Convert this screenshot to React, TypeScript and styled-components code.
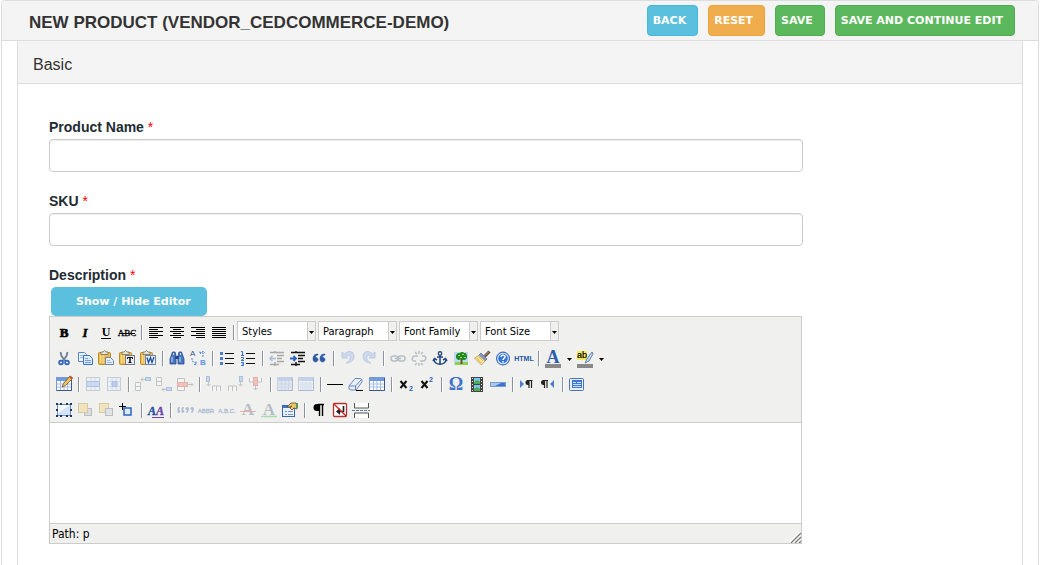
import React from "react";
import styled, { createGlobalStyle, css } from "styled-components";

const tahoma = '"DejaVu Sans Condensed", "DejaVu Sans", sans-serif';
const verdana = '"DejaVu Sans", sans-serif';
const arial = '"Liberation Sans", Arial, sans-serif';

const GlobalStyle = createGlobalStyle`
  * { box-sizing: border-box; }
  body { margin: 0; background: #fff; color: #333; font-family: ${arial}; }
`;

const Page = styled.main`
  display: flex;
  flex-direction: column;
  min-height: 100vh;
  margin: 0 1px;
  border: 1px solid #ddd;
  border-bottom: 0;
  border-radius: 4px 4px 0 0;
`;

const Header = styled.header`
  display: flex;
  align-items: center;
  justify-content: space-between;
  height: 40px;
  padding: 0 23px 0 27px;
  background: #f4f4f4;
  border-bottom: 1px solid #ddd;
  border-radius: 4px 4px 0 0;
`;

const Title = styled.h1`
  margin: 0;
  padding-top: 4px;
  font-size: 17px;
  line-height: 20px;
  font-weight: 700;
  color: #333;
`;

const Actions = styled.div`
  display: flex;
  gap: 10px;
`;

const tones = {
  info: { fill: "#5bc0de", edge: "#46b8da" },
  warning: { fill: "#f0ad4e", edge: "#eea236" },
  success: { fill: "#5cb85c", edge: "#4cae4c" },
};

const ActionButton = styled.button<{ $tone: keyof typeof tones }>`
  height: 31px;
  padding: 0 11px 0 5px;
  border: 1px solid ${(p) => tones[p.$tone].edge};
  border-radius: 4px;
  background: ${(p) => tones[p.$tone].fill};
  color: #fff;
  font: 700 11px/18px ${verdana};
  white-space: nowrap;
`;

const Section = styled.section`
  flex: 1;
  margin: 0 15px;
  border: 1px solid #ddd;
  border-width: 0 1px;
`;

const SectionTitle = styled.h2`
  margin: 0;
  padding: 15px 15px 9px;
  background: #f4f4f4;
  border-bottom: 1px solid #ddd;
  font-size: 16px;
  line-height: 18px;
  font-weight: 400;
`;

const Form = styled.form`
  display: flex;
  flex-direction: column;
  gap: 19px;
  width: 100%;
  padding: 33px 31px 20px;
`;

const Field = styled.div`
  display: flex;
  flex-direction: column;
  width: 80%;
`;

const Label = styled.label`
  padding-bottom: 2px;
  font-size: 14px;
  line-height: 20px;
  font-weight: 700;
  color: #222b33;
`;

const Required = styled.span`
  font-weight: 400;
  color: #f00;
`;

const TextInput = styled.input`
  width: 100%;
  height: 33px;
  padding: 6px 12px;
  border: 1px solid #ccc;
  border-radius: 4px;
  background: #fff;
  box-shadow: inset 0 1px 1px rgba(0, 0, 0, 0.075);
  font: 14px/20px ${arial};
`;

const ToggleButton = styled.button`
  align-self: flex-start;
  height: 29px;
  margin-left: 2px;
  padding: 0 16px 0 25px;
  border: 0;
  border-radius: 5px;
  background: #5bc0de;
  color: #fff;
  font: 700 11px/18px ${verdana};
`;

const Editor = styled.div`
  margin-right: 1px;
  border: 1px solid #ccc;
`;

const Toolbar = styled.div`
  display: flex;
  flex-direction: column;
  gap: 6px;
  padding: 4px 4px 3px;
  background: #f0f0ee;
  border-bottom: 1px solid #ccc;
`;

const ToolRow = styled.div`
  display: flex;
  height: 20px;
`;

const Tool = styled.button<{ $split?: boolean }>`
  display: flex;
  flex: none;
  width: 20px;
  height: 20px;
  margin-right: 1px;
  padding: 0;
  border: 0;
  background: none;
  ${(p) => p.$split && css`width: 31px;`}
  &:disabled { opacity: 0.35; }
`;

const Divider = styled.span`
  flex: none;
  width: 2px;
  height: 15px;
  margin: 4px 3px 0;
  border-left: 1px solid #8a93a5;
  border-right: 1px solid #fff;
`;

const Picker = styled.label`
  position: relative;
  flex: none;
  width: 79px;
  height: 20px;
  margin-right: 2px;
  &:first-of-type { margin-left: -1px; }
`;

const PickerSelect = styled.select`
  appearance: none;
  width: 100%;
  height: 20px;
  padding: 2px 10px 0 4px;
  border: 1px solid #ccc;
  border-radius: 0;
  background: #fff;
  color: #000;
  font: 11px/16px ${tahoma};
`;

const PickerArrow = styled.span`
  position: absolute;
  top: 1px;
  right: 0;
  display: flex;
  align-items: center;
  justify-content: center;
  width: 9px;
  height: 18px;
  padding-top: 3px;
  background: #f0f0ee;
  border: 1px solid #ccc;
  border-width: 0 1px;
  pointer-events: none;
`;

const Content = styled.textarea`
  display: block;
  width: 100%;
  height: 100px;
  padding: 8px;
  border: 0;
  outline: 0;
  resize: none;
  background: #fff;
`;

const StatusBar = styled.div`
  display: flex;
  align-items: flex-end;
  justify-content: space-between;
  height: 20px;
  padding-left: 2px;
  border-top: 1px solid #ccc;
  background: #f0f0ee;
  color: #000;
  font: 12px/18px ${tahoma};
`;

const Glyph = styled.svg`
  flex: none;
  overflow: visible;
`;

const serif = "Liberation Serif, serif";
const sans = "Liberation Sans, sans-serif";

const bars = (rows: [number, number][]) => (
  <g fill="#000" shapeRendering="crispEdges">
    {rows.map(([x, w], i) => (
      <rect key={i} x={x} y={6 + i * 2} width={w} height="1" />
    ))}
  </g>
);

const clipboard = (
  <>
    <rect x="2.500" y="5.500" width="12" height="12" rx="1" fill="#f0bd4a" stroke="#b98a25" />
    <path d="M4.500 8v8M7 8v8" stroke="#fbe3a0" />
    <path d="M5 7.500V5h2l1.500-1.500L10 5h2v2.500z" fill="#e8e4d2" stroke="#77705a" strokeWidth=".8" />
  </>
);

const grid = (
  <>
    <rect x="2.500" y="4.500" width="15" height="13" fill="#fff" stroke="#7f97c4" />
    <rect x="3" y="5" width="14" height="3" fill="#6f9be6" />
    <path d="M3 11h14M3 14h14M6.500 8v9M10 8v9M13.500 8v9" stroke="#a3bce8" />
    <path d="M2.500 17.500h15V5" fill="none" stroke="#3c5788" />
  </>
);

const paperGrid = (
  <>
    <rect x="3.500" y="4.500" width="13" height="13" fill="#e6efff" stroke="#7489b5" />
    <path d="M4 8.500h12M4 13.500h12M8 5v12M12 5v12" stroke="#a5b8dd" />
  </>
);

const icons: Record<string, React.ReactNode> = {
  bold: <text x="10" y="16" textAnchor="middle" fontFamily={serif} fontWeight="700" fontSize="13" stroke="#000" strokeWidth=".7">B</text>,
  italic: <text x="10" y="16" textAnchor="middle" fontFamily={serif} fontWeight="700" fontStyle="italic" fontSize="13" stroke="#000" strokeWidth=".4">I</text>,
  underline: (
    <>
      <text x="10" y="15" textAnchor="middle" fontFamily={serif} fontWeight="700" fontSize="12">U</text>
      <path d="M5 17.500h10" stroke="#000" />
    </>
  ),
  strike: (
    <>
      <text x="10" y="15" textAnchor="middle" fontFamily={serif} fontSize="9" stroke="#000" strokeWidth=".3">ABC</text>
      <path d="M2 12.500h16" stroke="#000" />
    </>
  ),
  left: bars([[3, 14], [3, 9], [3, 14], [3, 9], [3, 14], [3, 9]]),
  center: bars([[3, 14], [6, 8], [3, 14], [6, 8], [3, 14], [6, 8]]),
  right: bars([[3, 14], [8, 9], [3, 14], [8, 9], [3, 14], [8, 9]]),
  full: bars([[3, 14], [3, 14], [3, 14], [3, 14], [3, 14], [3, 14]]),
  cut: (
    <>
      <path d="M6.500 5l1 4 4 5M13.500 5l-1 4-4 5" fill="none" stroke="#6c7f96" strokeWidth="1.800" />
      <circle cx="7" cy="15.500" r="1.900" fill="none" stroke="#2d61bd" strokeWidth="1.700" />
      <circle cx="13" cy="15.500" r="1.900" fill="none" stroke="#2d61bd" strokeWidth="1.700" />
    </>
  ),
  copy: (
    <>
      <path d="M3.500 5.500h6l2 2v7h-8z" fill="#eaf3ff" stroke="#5a86cc" />
      <path d="M5 8.500h4M5 10.500h4" stroke="#92b4e6" />
      <path d="M8.500 8.500h6l3 3v6h-9z" fill="#dceaff" stroke="#3f6fbd" />
      <path d="M10 11.500h3M10 13.500h6M10 15.500h6" stroke="#6f9be0" />
    </>
  ),
  paste: (
    <>
      {clipboard}
      <path d="M9.500 10.500h5l3 3v4h-8z" fill="#e4eefc" stroke="#7086a8" />
      <path d="M11 13.500h3M11 15.500h5" stroke="#9bb3d8" />
    </>
  ),
  pasteText: (
    <>
      {clipboard}
      <rect x="8.500" y="8.500" width="9" height="9" fill="#e8ecf4" stroke="#778" />
      <path d="M10.500 12v-1.500h5V12M11.500 15.500h3" fill="none" stroke="#111" />
      <path d="M13 10v6" stroke="#111" strokeWidth="1.500" />
    </>
  ),
  pasteWord: (
    <>
      {clipboard}
      <rect x="7.500" y="8.500" width="10" height="9" fill="#e6effe" stroke="#6c84ae" />
      <path d="M9 10.500l1.500 5 2-5 1.500 5 2-5.500" fill="none" stroke="#234f9e" strokeWidth="1.300" />
    </>
  ),
  search: (
    <>
      <path d="M5.500 5h2.500l1 4v8H3v-5zM12 5h2.500l2.500 7v5h-6V9z" fill="#4a78c0" stroke="#24478d" strokeWidth=".8" />
      <path d="M8 9h4v3H8z" fill="#24478d" />
      <path d="M5 10v5M13 10v5M6.500 6v2M13.500 6v2" stroke="#c5daf8" />
    </>
  ),
  replace: (
    <>
      <text x="2" y="9" fontFamily={sans} fontSize="8" fill="#36548c">A</text>
      <text x="12" y="18" fontFamily={sans} fontSize="8" fontWeight="700" fill="#5893ef">B</text>
      <path d="M4 11v3l5 3M8 14.500v3H5M15 10V6l-4-1M12 7l3-3 2 2" fill="none" stroke="#4c82dd" strokeDasharray="2 1" />
    </>
  ),
  bullets: (
    <>
      <path d="M8 6.500h9M8 11.500h9M8 16.500h9" stroke="#111" />
      <path d="M3 5h3v3H3zM3 10h3v3H3zM3 15h3v3H3z" fill="#4d7ccc" />
    </>
  ),
  numbers: (
    <>
      <path d="M8 6.500h9M8 11.500h9M8 16.500h9" stroke="#111" />
      <path d="M3 4.500h1.500V8M3 8.500h3M3 10.500h2.500v1.500L3 13.500h3M3 15.500h2.500v3H3M4 17h1.500" fill="none" stroke="#3d73cf" />
    </>
  ),
  outdent: (
    <>
      <path d="M3 5.500h14M10 8.500h7M10 11.500h5M10 14.500h7M3 17.500h9M8 4v2M8 15v4" stroke="#222" strokeWidth="1.400" />
      <path d="M9 11.500H3M5.500 9L3 11.500 5.500 14" fill="none" stroke="#2d61bd" strokeWidth="1.600" />
    </>
  ),
  indent: (
    <>
      <path d="M3 5.500h14M10 8.500h7M10 11.500h5M10 14.500h7M3 17.500h9M8 4v2M8 15v4" stroke="#111" strokeWidth="1.400" />
      <path d="M2 11.500h6M5.500 9L8 11.500 5.500 14" fill="none" stroke="#2d61bd" strokeWidth="1.800" />
    </>
  ),
  quote: (
    <path d="M9 7C5 7 4 9 4 12c0 2 1 3 2.500 3S9 14 9 12.500 8 10.500 6.500 10.500C6.500 9 7.500 8 9 8zM16 7c-4 0-5 2-5 5 0 2 1 3 2.500 3s2.500-1 2.500-2.500-1-2-2.500-2c0-1.500 1-2.500 2.500-2.500z" fill="#2c58a8" stroke="#2c58a8" strokeWidth=".5" />
  ),
  undo: <path d="M4 5v6h6L8 9c3-2 5 0 4 3-.5 2-2 3-4 4 5 0 8-3 8-7 0-5-6-6-9.500-2z" fill="#8db4ef" stroke="#4774bd" strokeWidth=".8" />,
  redo: <path d="M16 5v6h-6l2-2c-3-2-5 0-4 3 .5 2 2 3 4 4-5 0-8-3-8-7 0-5 6-6 9.500-2z" fill="#8db4ef" stroke="#4774bd" strokeWidth=".8" />,
  link: (
    <g fill="none" stroke="#53637d" strokeWidth="1.500">
      <rect x="3" y="9" width="7" height="5" rx="2.500" />
      <rect x="10" y="9" width="7" height="5" rx="2.500" />
      <path d="M7 11.500h6" />
    </g>
  ),
  unlink: (
    <g fill="none" stroke="#53637d" strokeWidth="1.400">
      <path d="M9 9H6C3 9 2 14 5 14h2M11 14h3c3 0 4-5 1-5h-2M6 5l2 2M14 5l-2 2M10 4v3M6 18l2-2M14 18l-2-2M10 16v3" />
    </g>
  ),
  anchor: (
    <>
      <circle cx="10" cy="6.500" r="1.700" fill="#fff" stroke="#244983" strokeWidth="1.400" />
      <path d="M10 8v9M7 10h6M4 12c0 7 12 7 12 0M3 14l1.500-2.500L7 13M17 14l-1.500-2.500L13 13" fill="none" stroke="#244983" strokeWidth="1.600" />
    </>
  ),
  image: (
    <>
      <rect x="3.500" y="5.500" width="13" height="12" fill="#b5dcff" stroke="#c5d6ea" />
      <path d="M4 15h13v3H4z" fill="#8bd34b" />
      <path d="M9.500 11h2v6h-2z" fill="#80501e" />
      <path d="M5 11V8l2-2h2l1-1h2l1 1h2l1 3v2l-2 2h-3l-1-1-2 1H7z" fill="#238a26" />
      <path d="M7 8h2v1H7zM11 7h2v1h-2zM9 10h2v1H9zM13 10h2v1h-2z" fill="#8ddf47" />
    </>
  ),
  cleanup: (
    <>
      <path d="M17.500 4.500l-5 5" stroke="#614a40" strokeWidth="3" />
      <path d="M17 4.500l-5 5" stroke="#c9a286" strokeWidth="1" />
      <path d="M9 6l6 6-2 2-6.500-5.500z" fill="#8298c4" stroke="#53658a" strokeWidth=".7" />
      <path d="M7 8.500l6 5.500L9.500 18 2.500 11z" fill="#ffe6a0" stroke="#c09a4a" strokeWidth=".8" />
      <path d="M5 11l4 5M7 10l4 4" stroke="#cda03d" strokeWidth=".7" />
    </>
  ),
  help: (
    <>
      <circle cx="10" cy="11.500" r="6.500" fill="#2f72d9" stroke="#3a66b5" />
      <circle cx="10" cy="11.500" r="5.300" fill="none" stroke="#dbe9ff" strokeWidth="1.100" />
      <path d="M8 10c0-2.600 4.200-2.400 4 0 0 1.300-2 1.500-2 3M10 14v1.500" fill="none" stroke="#fff" strokeWidth="1.500" />
    </>
  ),
  html: <text x="10" y="14" textAnchor="middle" fontFamily={sans} fontWeight="700" fontSize="7" fill="#28569f">HTML</text>,
  color: (
    <>
      <text x="10" y="16" textAnchor="middle" fontFamily={serif} fontWeight="700" fontSize="18" fill="#2c5cac">A</text>
      <rect x="2" y="17" width="16" height="4" fill="#888" />
    </>
  ),
  highlight: (
    <>
      <rect x="2" y="4" width="10" height="9" fill="#f5ea55" />
      <text x="2" y="11" fontFamily={sans} fontSize="9" fill="#000" stroke="#000" strokeWidth=".2">ab</text>
      <path d="M17 5l-5 7-2 4 4-2 4-7z" fill="#c5daf5" stroke="#58779e" strokeWidth=".9" />
      <rect x="2" y="17" width="16" height="4" fill="#888" />
    </>
  ),
  table: (
    <>
      {grid}
      <path d="M16 3l2.500 2.500-7 7L8 14l1.500-3.500z" fill="#eec556" stroke="#765527" strokeWidth=".8" />
      <path d="M15 4l1.500-1.500 2.500 2.500-1.500 1.500z" fill="#c94c38" />
    </>
  ),
  rowProps: <>{paperGrid}<path d="M3.500 8.500h13v5h-13z" fill="#87b2fb" stroke="#356fc9" /></>,
  cellProps: <>{paperGrid}<path d="M8 8.500h5v5H8z" fill="#4c87ea" stroke="#356fc9" /></>,
  rowBefore: (
    <g fill="#fff" stroke="#69727f">
      <path d="M2.500 9.500h5v8h-5zM2.500 13.500h5" />
      <rect x="12.500" y="4.500" width="5" height="3" fill="#83aef1" stroke="#2f67bc" />
      <path d="M12 6.500H8M10 4.500l-2 2 2 2" fill="none" />
    </g>
  ),
  rowAfter: (
    <g fill="#fff" stroke="#69727f">
      <path d="M2.500 4.500h5v8h-5zM2.500 8.500h5" />
      <rect x="12.500" y="14.500" width="5" height="3" fill="#83aef1" stroke="#2f67bc" />
      <path d="M12 16.500H8M10 14.500l-2 2 2 2" fill="none" />
    </g>
  ),
  rowDelete: (
    <g fill="#fff" stroke="#69727f">
      <path d="M2.500 5.500h7v12h-7z" />
      <rect x="2.500" y="9.500" width="10" height="4" fill="#f26f66" stroke="#c93a32" />
      <path d="M13 11.500h5M16 9.500l2 2-2 2" fill="none" />
    </g>
  ),
  colBefore: (
    <g fill="#fff" stroke="#69727f">
      <rect x="2.500" y="3.500" width="3" height="5" fill="#83aef1" stroke="#2f67bc" />
      <path d="M4.500 9v4M2.500 11l2 2 2-2" fill="none" />
      <path d="M8.500 18v-5h8v5M12.500 13v5" />
    </g>
  ),
  colAfter: (
    <g fill="#fff" stroke="#69727f">
      <rect x="14.500" y="3.500" width="3" height="5" fill="#83aef1" stroke="#2f67bc" />
      <path d="M15.500 9v4M13.500 11l2 2 2-2" fill="none" />
      <path d="M3.500 18v-5h8v5M7.500 13v5" />
    </g>
  ),
  colDelete: (
    <g fill="#fff" stroke="#69727f">
      <path d="M3.500 5v4h12V5" />
      <rect x="7.500" y="4.500" width="4" height="8" fill="#f26f66" stroke="#c93a32" />
      <path d="M9.500 13v4M7.500 15l2 2 2-2" fill="none" />
    </g>
  ),
  split: <>{grid}<path d="M3 8h14v9H3z" fill="#6795dd" fillOpacity=".4" /></>,
  merge: <>{grid}<path d="M4 9h12v8H4z" fill="#bad1f7" /></>,
  hr: <path d="M2 11.500h16" stroke="#000" />,
  eraser: (
    <>
      <path d="M3 13l6-7.500h5l2 1v2.500l-6 8H5l-2-1z" fill="#e7effd" stroke="#6c89bd" />
      <path d="M3.500 13h6l6-6.500M9.500 13v4" fill="none" stroke="#6c89bd" />
      <path d="M10 17.500h7" stroke="#000" />
    </>
  ),
  visualAid: grid,
  sub: (
    <>
      <path d="M4.500 8l6 7M10.500 8l-6 7" stroke="#111" strokeWidth="2" />
      <text x="13" y="18" fontFamily={sans} fontSize="7" fontWeight="700" fill="#2f64bd">2</text>
    </>
  ),
  sup: (
    <>
      <path d="M4.500 8l6 7M10.500 8l-6 7" stroke="#111" strokeWidth="2" />
      <text x="12" y="9" fontFamily={sans} fontSize="7" fontWeight="700" fill="#2f64bd">2</text>
    </>
  ),
  omega: <text x="10" y="17" textAnchor="middle" fontFamily={serif} fontWeight="700" fontSize="18" fill="#3f74c8">Ω</text>,
  media: (
    <>
      <rect x="4" y="4" width="12" height="15" fill="#444" />
      <path d="M7 5h6v6H7zM7 12h6v6H7z" fill="#7cc4f5" />
      <path d="M7 9l3-2 3 2v2H7zM7 16l3-2 3 2v2H7z" fill="#4bae4a" />
      <path d="M5.500 5v13M14.500 5v13" stroke="#ddd" strokeDasharray="1 2" />
    </>
  ),
  advHr: (
    <>
      <rect x="2.500" y="9.500" width="15" height="4" fill="#3c73d2" stroke="#799bd0" />
      <path d="M3 10h10l-6 3H3z" fill="#a9c7f5" />
    </>
  ),
  ltr: (
    <>
      <path d="M3 7l4 4-4 4z" fill="#4a7ed1" />
      <path d="M15.500 7.500h-5M12 7v8M14.500 7v8" fill="none" stroke="#222" strokeWidth="1.200" />
      <path d="M12 7v5h-1a2.500 2.500 0 0 1 0-5z" fill="#222" />
    </>
  ),
  rtl: (
    <>
      <path d="M16 7l-4 4 4 4z" fill="#4a7ed1" />
      <path d="M10 7.500H5M6.500 7v8M9 7v8" fill="none" stroke="#222" strokeWidth="1.200" />
      <path d="M6.500 7v5h-1a2.500 2.500 0 0 1 0-5z" fill="#222" />
    </>
  ),
  fullscreen: (
    <>
      <rect x="2.500" y="5.500" width="14" height="12" rx="1" fill="#e9f1ff" stroke="#4a72b5" />
      <rect x="5" y="7" width="10" height="8" fill="#3c76d7" />
      <path d="M6 9.500h3M10 9.500h4M6 11.500h8M6 13.500h8" stroke="#cfe1ff" />
    </>
  ),
  layer: (
    <>
      <rect x="3.500" y="5.500" width="13" height="11" fill="#d3e3fb" stroke="#7390bf" />
      <path d="M4 6h12L4 14z" fill="#f6faff" />
      <path d="M2 4h2v2H2zM6 4h2v2H6zM12 4h2v2h-2zM16 4h2v2h-2zM2 16h2v2H2zM6 16h2v2H6zM12 16h2v2h-2zM16 16h2v2h-2zM2 10h2v2H2zM16 10h2v2h-2z" fill="#1c365f" />
    </>
  ),
  forward: (
    <>
      <rect x="9.500" y="9.500" width="7" height="7" fill="#b5bac4" stroke="#59616f" />
      <rect x="3.500" y="4.500" width="9" height="9" fill="#f4cd60" stroke="#a48127" />
    </>
  ),
  backward: (
    <>
      <rect x="3.500" y="4.500" width="9" height="9" fill="#f4cd60" stroke="#a48127" />
      <rect x="9.500" y="9.500" width="7" height="7" fill="#c5cad3" stroke="#59616f" />
    </>
  ),
  absolute: (
    <>
      <path d="M2 7.500h7M5.500 4v7" stroke="#000" />
      <rect x="7" y="9" width="7" height="7" fill="#dcebff" stroke="#2c63c3" strokeWidth="1.500" />
    </>
  ),
  styles: (
    <>
      <text x="2" y="16" fontFamily={serif} fontWeight="700" fontStyle="italic" fontSize="12" fill="#244fa0" stroke="#244fa0" strokeWidth=".4">A</text>
      <text x="10" y="16" fontFamily={serif} fontWeight="700" fontStyle="italic" fontSize="12" fill="#6947a5" stroke="#6947a5" strokeWidth=".4">A</text>
      <path d="M6 18.500h12" stroke="#6947a5" />
    </>
  ),
  cite: (
    <g fill="#315da7">
      <path d="M5 8H4c-2 0-2 6-.5 6C6 14 5.500 11 4 11c0-1 .5-2 1-2zM9 8H8c-2 0-2 6-.5 6 2.500 0 2-3 .5-3 0-1 .5-2 1-2zM12 8c3 0 2 4 0 6h-1l1-3c-2 0-2-3 0-3zM17 8c3 0 2 4 0 6h-1l1-3c-2 0-2-3 0-3z" />
    </g>
  ),
  abbr: <text x="10" y="14" textAnchor="middle" fontFamily={sans} fontSize="6" fill="#315da7" stroke="#315da7" strokeWidth=".3">ABBR</text>,
  acronym: <text x="10" y="14" textAnchor="middle" fontFamily={sans} fontSize="6" fill="#315da7" stroke="#315da7" strokeWidth=".3">A.B.C.</text>,
  del: (
    <>
      <text x="10" y="16" textAnchor="middle" fontFamily={serif} fontWeight="700" fontSize="17" fill="#4d5d78">A</text>
      <path d="M2 12.500h16" stroke="#e03434" />
    </>
  ),
  ins: (
    <>
      <text x="10" y="16" textAnchor="middle" fontFamily={serif} fontWeight="700" fontSize="17" fill="#4d5d78">A</text>
      <path d="M2 17.500h16" stroke="#27b34a" strokeWidth="1.500" />
    </>
  ),
  attributes: (
    <>
      <rect x="2.500" y="6.500" width="12" height="11" fill="#e5efff" stroke="#3768ae" />
      <path d="M3 7h11v2H3z" fill="#3c73ca" />
      <path d="M5 12.500h2M8 12.500h5M5 15.500h2M8 15.500h5" stroke="#7994c2" />
      <path d="M7 8l4-4h5l1 2v4l-3-1-2 2-2-2 2-2-2 1z" fill="#ecc26a" stroke="#665026" strokeWidth=".8" />
      <path d="M16 4h2v5h-2z" fill="#5c9a54" />
    </>
  ),
  pilcrow: (
    <>
      <path d="M9 5.500h6M10.500 6v11M13.500 6v11" stroke="#000" strokeWidth="1.400" />
      <path d="M11 5H8a3.500 3.500 0 0 0 0 7h3z" fill="#000" />
    </>
  ),
  nonbreaking: (
    <>
      <rect x="3.500" y="4.500" width="13" height="13" rx="1" fill="#fff" stroke="#b33030" strokeWidth="1.300" />
      <path d="M13.500 7v5.500H9" fill="none" stroke="#222" strokeWidth="1.600" />
      <path d="M10 9v7l-4-3.500z" fill="#222" />
      <path d="M4 5l12 12" stroke="#d42828" strokeWidth="1.400" />
    </>
  ),
  pagebreak: (
    <>
      <path d="M3.500 4v5h14V4M3.500 19v-5h14v5" fill="#fff" stroke="#555" />
      <path d="M1 11.500h18" stroke="#5e8097" strokeDasharray="3 1" />
    </>
  ),
};

type ToolSpec = { name: keyof typeof icons; label: string; off?: boolean; split?: boolean };
const t = (name: string, label: string): ToolSpec => ({ name, label });
const off = (name: string, label: string): ToolSpec => ({ name, label, off: true });
const split = (name: string, label: string): ToolSpec => ({ name, label, split: true });

const rows: ToolSpec[][][] = [
  [
    [t("bold", "Bold"), t("italic", "Italic"), t("underline", "Underline"), t("strike", "Strikethrough")],
    [t("left", "Align left"), t("center", "Align center"), t("right", "Align right"), t("full", "Align full")],
  ],
  [
    [t("cut", "Cut"), t("copy", "Copy"), t("paste", "Paste"), t("pasteText", "Paste as plain text"), t("pasteWord", "Paste from Word")],
    [t("search", "Find"), t("replace", "Find and replace")],
    [t("bullets", "Unordered list"), t("numbers", "Ordered list")],
    [off("outdent", "Outdent"), t("indent", "Indent"), t("quote", "Blockquote")],
    [off("undo", "Undo"), off("redo", "Redo")],
    [off("link", "Insert link"), off("unlink", "Unlink"), t("anchor", "Anchor"), t("image", "Image"), t("cleanup", "Clean up code"), t("help", "Help"), t("html", "Edit HTML source")],
    [split("color", "Text color"), split("highlight", "Background color")],
  ],
  [
    [t("table", "Insert table")],
    [off("rowProps", "Row properties"), off("cellProps", "Cell properties")],
    [off("rowBefore", "Insert row before"), off("rowAfter", "Insert row after"), off("rowDelete", "Delete row")],
    [off("colBefore", "Insert column before"), off("colAfter", "Insert column after"), off("colDelete", "Delete column")],
    [off("split", "Split cells"), off("merge", "Merge cells")],
    [t("hr", "Horizontal line"), t("eraser", "Remove formatting"), t("visualAid", "Toggle guidelines")],
    [t("sub", "Subscript"), t("sup", "Superscript")],
    [t("omega", "Special character"), t("media", "Embedded media"), t("advHr", "Horizontal rule")],
    [t("ltr", "Left to right"), t("rtl", "Right to left")],
    [t("fullscreen", "Fullscreen")],
  ],
  [
    [t("layer", "Insert layer"), off("forward", "Move forward"), off("backward", "Move backward"), t("absolute", "Absolute positioning")],
    [t("styles", "Edit CSS style")],
    [off("cite", "Citation"), off("abbr", "Abbreviation"), off("acronym", "Acronym"), off("del", "Deletion"), off("ins", "Insertion"), t("attributes", "Attributes")],
    [t("pilcrow", "Visual characters"), t("nonbreaking", "Non-breaking space"), t("pagebreak", "Page break")],
  ],
];

const pickers = ["Styles", "Paragraph", "Font Family", "Font Size"];

const Arrow = () => (
  <svg width="5" height="3" viewBox="0 0 5 3" aria-hidden="true">
    <path d="M0 0h5L2.500 3z" fill="#000" />
  </svg>
);

function ToolButton({ spec }: { spec: ToolSpec }) {
  return (
    <Tool type="button" aria-label={spec.label} disabled={spec.off} $split={spec.split}>
      <Glyph width={spec.split ? 31 : 20} height="20" aria-hidden="true">
        {icons[spec.name]}
        {spec.split && <path d="M24 11h5l-2.500 3z" fill="#000" />}
      </Glyph>
    </Tool>
  );
}

function RichTextEditor() {
  return (
    <Editor>
      <Toolbar role="toolbar" aria-label="Editor toolbar">
        {rows.map((groups, r) => (
          <ToolRow key={r}>
            {groups.map((group, g) => (
              <React.Fragment key={g}>
                {g > 0 && <Divider />}
                {group.map((spec) => <ToolButton key={spec.name} spec={spec} />)}
              </React.Fragment>
            ))}
            {r === 0 && (
              <>
                <Divider />
                {pickers.map((name) => (
                  <Picker key={name}>
                    <PickerSelect aria-label={name}>
                      <option>{name}</option>
                    </PickerSelect>
                    <PickerArrow><Arrow /></PickerArrow>
                  </Picker>
                ))}
              </>
            )}
          </ToolRow>
        ))}
      </Toolbar>
      <Content id="description" />
      <StatusBar>
        <span>Path: p</span>
        <svg width="11" height="11" viewBox="0 0 11 11" aria-hidden="true">
          <path d="M0 11L11 0M4 11l7-7M8 11l3-3" stroke="#fff" strokeWidth="3" />
          <path d="M1 11L11 1M5 11l6-6M9 11l2-2" stroke="#777" strokeWidth="1.300" />
        </svg>
      </StatusBar>
    </Editor>
  );
}

export default function App() {
  return (
    <>
      <GlobalStyle />
      <Page>
        <Header>
          <Title>NEW PRODUCT (VENDOR_CEDCOMMERCE-DEMO)</Title>
          <Actions>
            <ActionButton type="button" $tone="info">BACK</ActionButton>
            <ActionButton type="reset" form="product" $tone="warning">RESET</ActionButton>
            <ActionButton type="button" $tone="success">SAVE</ActionButton>
            <ActionButton type="button" $tone="success">SAVE AND CONTINUE EDIT</ActionButton>
          </Actions>
        </Header>
        <Section>
          <SectionTitle>Basic</SectionTitle>
          <Form id="product">
            <Field>
              <Label htmlFor="name">Product Name <Required>*</Required></Label>
              <TextInput id="name" type="text" />
            </Field>
            <Field>
              <Label htmlFor="sku">SKU <Required>*</Required></Label>
              <TextInput id="sku" type="text" />
            </Field>
            <Field>
              <Label htmlFor="description">Description <Required>*</Required></Label>
              <ToggleButton type="button">Show / Hide Editor</ToggleButton>
              <RichTextEditor />
            </Field>
          </Form>
        </Section>
      </Page>
    </>
  );
}
